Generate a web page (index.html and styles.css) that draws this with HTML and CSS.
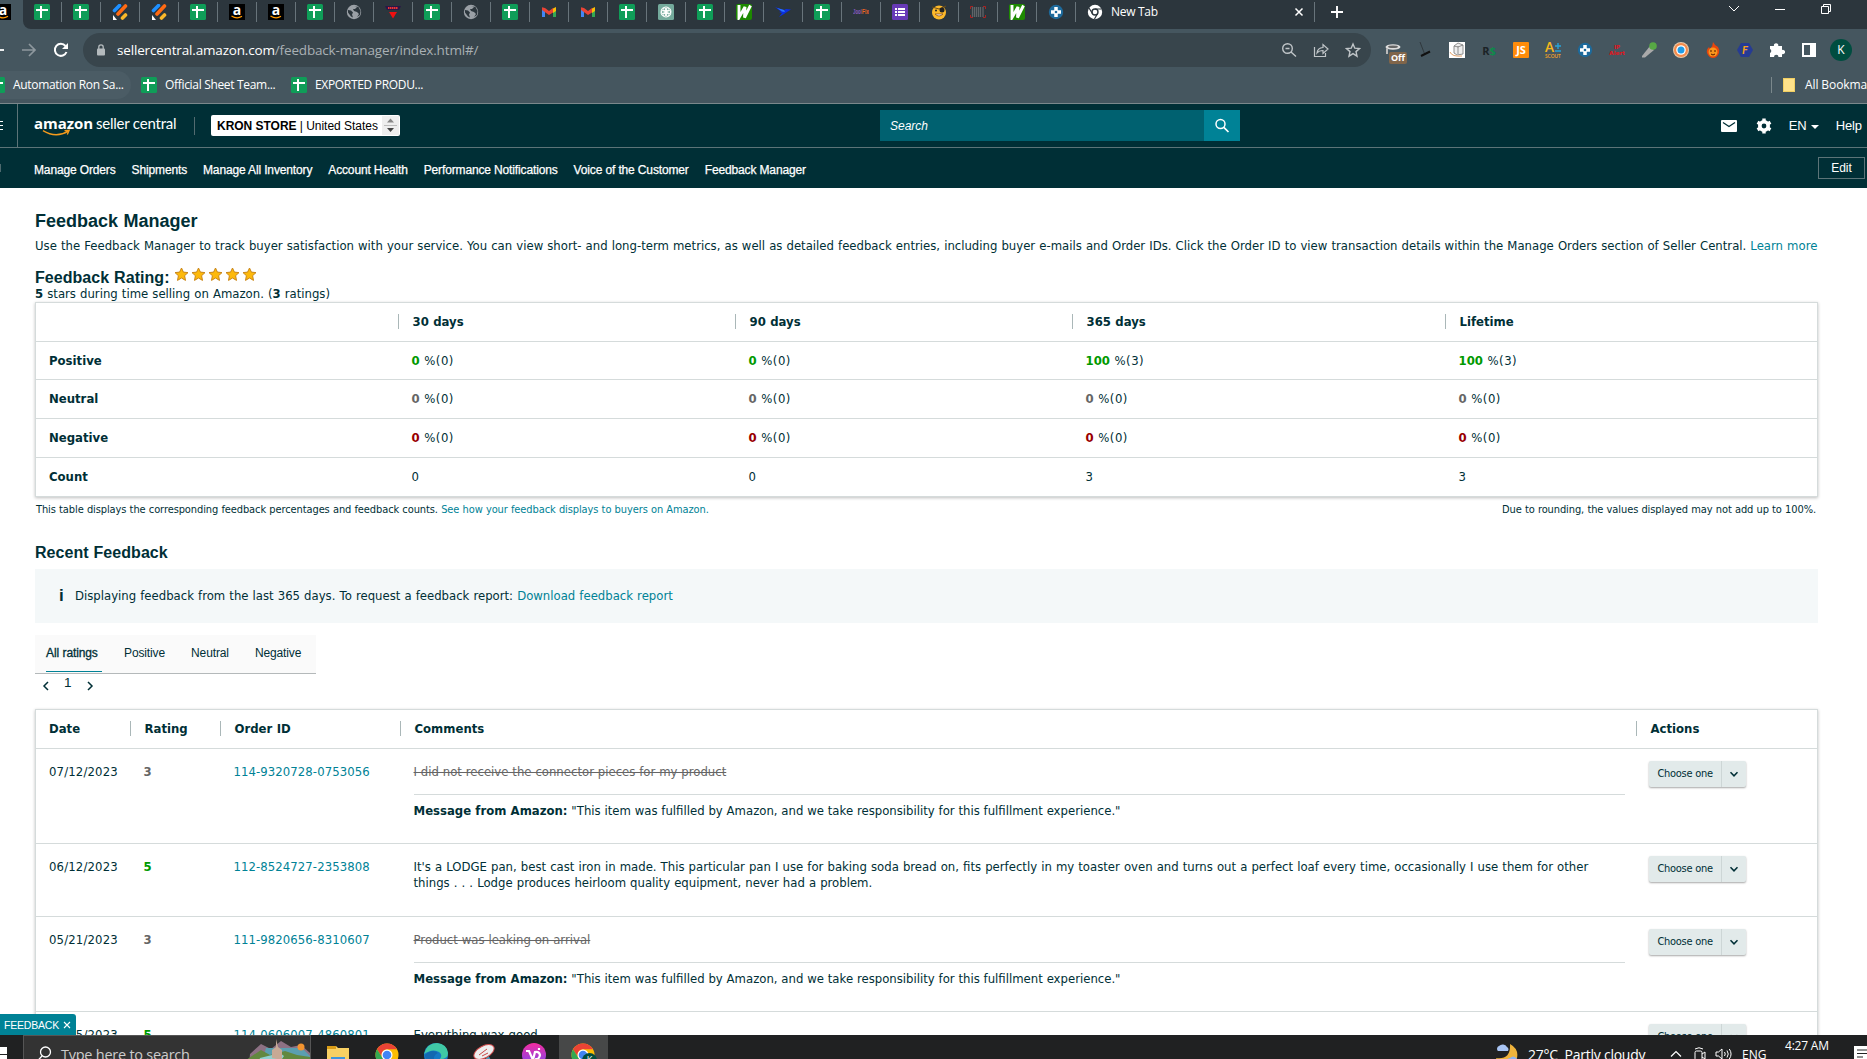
FILE: index.html
```html
<!DOCTYPE html>
<html lang="en">
<head>
    <meta charset="UTF-8">
    <title>Feedback Manager</title>
    <link rel="stylesheet" href="styles.css">
</head>
<body>

<!-- Shared icons -->
<svg class="sprite" width="0" height="0">
    <symbol id="sheet" viewBox="0 0 16 16"><rect width="16" height="16" rx="1.5" fill="#0f9d58"/><path d="M2 6h12M7 2v12" stroke="#fff" stroke-width="2"/></symbol>
    <symbol id="stripes" viewBox="0 0 16 16"><g stroke-width="3.6" stroke-linecap="round"><path d="M2.500 6.500l5-5" stroke="#1e90ff"/><path d="M6 10l7.500-8" stroke="#ff6a13"/><path d="M10.500 14l3-3" stroke="#fbb829"/></g><path d="M1 11l4 5H1z" fill="#fff"/></symbol>
    <symbol id="amazon" viewBox="0 0 16 16"><rect width="16" height="16" fill="#000"/><text x="8" y="10.500" font-size="14" font-weight="bold" text-anchor="middle" fill="#fff" font-family="Open Sans">a</text><path d="M2.500 12q5.500 3.500 10.500.3" fill="none" stroke="#f90" stroke-width="1.200"/></symbol>
    <symbol id="globe" viewBox="0 0 16 16"><circle cx="8" cy="8" r="7.200" fill="#9aa0a6"/><path d="M2 6l3 .5 2 2-1 2 1 3-2-1-3-4zM8 2l3 1-2 2H7l1 2 3 1 2 2-2 3 3-2 .5-4-2-4z" fill="#2c363d"/></symbol>
    <symbol id="redtri" viewBox="0 0 16 16"><path d="M0 2h16l-2 4H2z" fill="#2b1648"/><path d="M3 4h10" stroke="#e33" stroke-width="2" stroke-dasharray="1.500 .5"/><path d="M4 8h8l-4 6.500z" fill="#f01010"/></symbol>
    <symbol id="gmail" viewBox="0 0 16 16"><path d="M1 4v9h3V7z" fill="#4285f4"/><path d="M15 4v9h-3V7z" fill="#34a853"/><path d="M12 4.500L15 3v4l-3 2z" fill="#fbbc04"/><path d="M1 3.200L4 4l4 3 4-3v4.500L8 11 1 6z" fill="#ea4335"/></symbol>
    <symbol id="gpt" viewBox="0 0 16 16"><rect width="16" height="16" rx="1.500" fill="#74aa9c"/><g fill="none" stroke="#fff" stroke-width=".9"><ellipse cx="8" cy="5.500" rx="3" ry="2.600"/><ellipse cx="8" cy="5.500" rx="3" ry="2.600" transform="rotate(60 8 8)"/><ellipse cx="8" cy="5.500" rx="3" ry="2.600" transform="rotate(120 8 8)"/><ellipse cx="8" cy="5.500" rx="3" ry="2.600" transform="rotate(180 8 8)"/><ellipse cx="8" cy="5.500" rx="3" ry="2.600" transform="rotate(240 8 8)"/><ellipse cx="8" cy="5.500" rx="3" ry="2.600" transform="rotate(300 8 8)"/></g></symbol>
    <symbol id="wicon" viewBox="0 0 16 16"><rect width="16" height="16" rx="2" fill="#1d8a00"/><path d="M3 1L3 13.500 9 3l-.5 10.500L14.500 1.500" fill="none" stroke="#fff" stroke-width="2.900"/></symbol>
    <symbol id="bird" viewBox="0 0 16 16"><path d="M0 3l9 3 2-1 5 .5-4 2.500-3 2-5 3 3-4-3-1 2-.5z" fill="#0b2ee0"/><path d="M2 4l7 2 1 2-3-.5z" fill="#2a78ff"/></symbol>
    <symbol id="hd" viewBox="0 0 16 16"><text x="0" y="10" font-size="6.500" font-weight="bold" font-family="Liberation Sans" fill="#8a5bc0" textLength="9" lengthAdjust="spacingAndGlyphs">Jool</text><text x="9" y="10" font-size="6.500" font-weight="bold" font-family="Liberation Sans" fill="#f26522" textLength="7" lengthAdjust="spacingAndGlyphs">Fix</text></symbol>
    <symbol id="forms" viewBox="0 0 16 16"><rect width="16" height="16" rx="1.500" fill="#673ab7"/><path d="M3 5h2M3 8h2M3 11h2M6 5h7M6 8h7M6 11h7" stroke="#fff" stroke-width="1.800"/></symbol>
    <symbol id="emoji" viewBox="0 0 16 16"><circle cx="8" cy="8.500" r="7" fill="#fcb92b"/><path d="M1 3l7 2 7-3" stroke="#6b4b16" fill="none"/><circle cx="11" cy="6" r="2.500" fill="#222"/><circle cx="5" cy="6.500" r="1" fill="#222"/><path d="M4 10q4 4 8 0z" fill="#fff" stroke="#8d4e12" stroke-width=".8"/></symbol>
    <symbol id="barcode" viewBox="0 0 16 16"><path d="M2.500 3v10M4.500 3v10M6.500 3v10M8.500 3v10M10.500 3v10M13 3v10" stroke="#5e6468" stroke-width="1.300"/><path d="M.5 5V2.500H3M13 2.500h2.500V5M.5 11v2.500H3M13 13.500h2.500V11" fill="none" stroke="#a22"/></symbol>
    <symbol id="bluex" viewBox="0 0 16 16"><circle cx="8" cy="8" r="7.200" fill="#1d6a9c"/><path d="M8 3v10M3 8h10" stroke="#fff" stroke-width="3.500"/><circle cx="8" cy="8" r="1.300" fill="#1d6a9c"/></symbol>
    <symbol id="chrome" viewBox="0 0 24 24"><circle cx="12" cy="12" r="11.500" fill="#fbbc04"/><path d="M2 6.300A11.500 11.500 0 0 1 22 6.300H12a5.500 5.500 0 0 0-4.800 8z" fill="#ea4335"/><path d="M2 6.300A11.500 11.500 0 0 0 11 23.500l5-8.700a5.500 5.500 0 0 1-8.800-.3z" fill="#34a853"/><circle cx="12" cy="12" r="5.500" fill="#fff"/><circle cx="12" cy="12" r="4.300" fill="#4285f4"/></symbol>
    <symbol id="star" viewBox="0 0 15 15"><path d="M7.500 1l1.900 4.100 4.600.5-3.400 3.100.9 4.700-4-2.400-4 2.400.9-4.700L1 5.600l4.600-.5z" fill="#fdb90b" stroke="#c9861a"/></symbol>
    <symbol id="down" viewBox="0 0 10 10"><path d="M1.500 3.200L5 6.800l3.500-3.600" fill="none" stroke="currentColor" stroke-width="1.500"/></symbol>
    <symbol id="mag" viewBox="0 0 16 16"><circle cx="6.500" cy="6" r="4.500" fill="none" stroke="currentColor" stroke-width="1.500"/><path d="M9.800 9.300l4.700 4.700" stroke="currentColor" stroke-width="1.700"/></symbol>
</svg>

<div class="tab-strip">
    <div class="tab active"><svg><use href="#amazon"/></svg></div>
    <div class="tabs">
        <div class="tab"><svg><use href="#sheet"/></svg></div>
        <div class="tab"><svg><use href="#sheet"/></svg></div>
        <div class="tab"><svg><use href="#stripes"/></svg></div>
        <div class="tab"><svg><use href="#stripes"/></svg></div>
        <div class="tab"><svg><use href="#sheet"/></svg></div>
        <div class="tab"><svg><use href="#amazon"/></svg></div>
        <div class="tab"><svg><use href="#amazon"/></svg></div>
        <div class="tab"><svg><use href="#sheet"/></svg></div>
        <div class="tab"><svg><use href="#globe"/></svg></div>
        <div class="tab"><svg><use href="#redtri"/></svg></div>
        <div class="tab"><svg><use href="#sheet"/></svg></div>
        <div class="tab"><svg><use href="#globe"/></svg></div>
        <div class="tab"><svg><use href="#sheet"/></svg></div>
        <div class="tab"><svg><use href="#gmail"/></svg></div>
        <div class="tab"><svg><use href="#gmail"/></svg></div>
        <div class="tab"><svg><use href="#sheet"/></svg></div>
        <div class="tab"><svg><use href="#gpt"/></svg></div>
        <div class="tab"><svg><use href="#sheet"/></svg></div>
        <div class="tab"><svg><use href="#wicon"/></svg></div>
        <div class="tab"><svg><use href="#bird"/></svg></div>
        <div class="tab"><svg><use href="#sheet"/></svg></div>
        <div class="tab"><svg><use href="#hd"/></svg></div>
        <div class="tab"><svg><use href="#forms"/></svg></div>
        <div class="tab"><svg><use href="#emoji"/></svg></div>
        <div class="tab"><svg><use href="#barcode"/></svg></div>
        <div class="tab"><svg><use href="#wicon"/></svg></div>
        <div class="tab"><svg><use href="#bluex"/></svg></div>
        <div class="tab new-tab">
            <svg viewBox="0 0 16 16"><circle cx="8" cy="8" r="7.200" fill="#fff"/><circle cx="8" cy="8" r="3" fill="none" stroke="#2c363d" stroke-width="1.400"/><path d="M8 5h6.500M5.400 9.500L2 4M10.600 9.500L7.500 15" stroke="#2c363d" stroke-width="1.200"/></svg>
            <span>New Tab</span>
            <svg class="close" viewBox="0 0 10 10"><path d="M1.500 1.500l7 7M8.500 1.500l-7 7" stroke="#fff" stroke-width="1.500"/></svg>
        </div>
        <svg class="plus" viewBox="0 0 12 12"><path d="M6 0v12M0 6h12" stroke="#fff" stroke-width="1.900"/></svg>
        <div class="window-buttons">
            <svg viewBox="0 0 12 12"><path d="M1 3l5 5 5-5" fill="none" stroke="#fff"/></svg>
            <svg viewBox="0 0 12 12"><path d="M1 6.500h10" stroke="#fff"/></svg>
            <svg viewBox="0 0 12 12"><path d="M1.500 3.500h7v7h-7zM3.500 3.500v-2h7v7h-2" fill="none" stroke="#fff"/></svg>
        </div>
    </div>
</div>

<div class="toolbar">
    <svg class="back" viewBox="0 0 4 16"><path d="M0 8h4" stroke="#fff" stroke-width="1.800"/></svg>
    <svg class="forward" viewBox="0 0 16 16"><path d="M1 8h13M8 2l6 6-6 6" fill="none" stroke="#8e989e" stroke-width="1.700"/></svg>
    <svg class="reload" viewBox="0 0 16 16"><path d="M13.500 10A6 6 0 1 1 12.500 4" fill="none" stroke="#fff" stroke-width="2"/><path d="M15 1v6H9z" fill="#fff"/></svg>
    <div class="address">
        <svg class="lock" viewBox="0 0 10 12"><rect x="1" y="4.500" width="8" height="7" rx="1" fill="#b4babd"/><path d="M2.800 5V3a2.200 2.200 0 0 1 4.400 0v2" fill="none" stroke="#b4babd" stroke-width="1.300"/></svg>
        <span class="url"><b>sellercentral.amazon.com</b>/feedback-manager/index.html#/</span>
        <svg viewBox="0 0 16 16"><circle cx="6.500" cy="6.500" r="4.800" fill="none" stroke="#c0c5c8" stroke-width="1.400"/><path d="M4.500 6.500h4M10 10l5 4.500" stroke="#c0c5c8" stroke-width="1.400"/></svg>
        <svg viewBox="0 0 16 16"><path d="M1.500 5v9.500h11V11" fill="none" stroke="#c0c5c8" stroke-width="1.200"/><path d="M4 11q.5-5 6-5.500V2.500l5 4.500-5 4.500V8.500Q6 8.500 4 11z" fill="none" stroke="#c0c5c8" stroke-width="1.200"/></svg>
        <svg viewBox="0 0 16 16"><path d="M8 2l1.800 4.200 4.700.4-3.500 3 1 4.600-4-2.500-4 2.500 1-4.600-3.500-3 4.700-.4z" fill="none" stroke="#c0c5c8" stroke-width="1.400"/></svg>
    </div>
    <div class="extensions">
        <div class="ext"><svg viewBox="0 0 16 16"><ellipse cx="8" cy="5" rx="7.500" ry="2.800" fill="#ddd"/><ellipse cx="8" cy="4.800" rx="5" ry="1.200" fill="#666"/><path d="M1 6v6h2V7" fill="#bbb"/></svg><span class="off">Off</span></div>
        <div class="ext"><svg viewBox="0 0 16 16"><path d="M3 0l5 13" stroke="#30383d"/><path d="M4 14l9-4.500" stroke="#111" stroke-width="2"/></svg></div>
        <div class="ext"><svg viewBox="0 0 16 16"><rect width="16" height="16" fill="#fff"/><path d="M5 4l4-3 5 2v9l-6 1-3-2z" fill="#eee" stroke="#777" stroke-width=".8"/><path d="M9 4v8M5 4l4 1 5-2" fill="none" stroke="#777" stroke-width=".8"/><path d="M1 10q2 5 12 4" fill="none" stroke="#e2a26a"/></svg></div>
        <div class="ext rs">R<span>$</span></div>
        <div class="ext"><svg viewBox="0 0 16 16"><rect width="16" height="16" rx="1" fill="#ff8c0a"/><text x="8" y="12" font-size="11" font-weight="bold" text-anchor="middle" fill="#fff" font-family="Open Sans">JS</text></svg></div>
        <div class="ext"><svg viewBox="0 0 16 16"><text x="0" y="10" font-size="13" font-weight="bold" fill="#f6b81c" font-family="Lato">A</text><path d="M10 4h6M13 1v6M10 9h6" stroke="#28a2d8" stroke-width="1.400"/><text x="0" y="15.500" font-size="5.500" font-weight="bold" fill="#e39b2c" textLength="16" lengthAdjust="spacingAndGlyphs" font-family="Lato">SCOUT</text></svg></div>
        <div class="ext"><svg><use href="#bluex"/></svg></div>
        <div class="ext"><svg viewBox="0 0 16 16" font-family="DejaVu Sans" font-weight="bold" font-size="5.500" fill="#e0151d" text-anchor="middle"><text x="8" y="7">IP</text><text x="8" y="13" textLength="16" lengthAdjust="spacingAndGlyphs">Alert</text></svg></div>
        <div class="ext"><svg viewBox="0 0 16 16"><path d="M9 4l4 4-9 7.500H1V14z" fill="#aaa"/><circle cx="12" cy="4" r="3.800" fill="#57a845"/></svg></div>
        <div class="ext"><svg viewBox="0 0 16 16"><circle cx="8" cy="8" r="8" fill="#e8c9a8"/><circle cx="8" cy="8" r="7" fill="#f58b4c"/><circle cx="8" cy="8" r="4.800" fill="#fff"/><circle cx="8" cy="8" r="3.500" fill="#1f9ce8"/></svg></div>
        <div class="ext"><svg viewBox="0 0 16 16"><path d="M8 0q2 4 5 5 2 3 1 6-2 5-6 5t-6-5q-1-3 2-6l1 2q3-3 3-7z" fill="#e8450c"/><circle cx="8" cy="10" r="4.500" fill="#f8961d"/><path d="M6 8v2M10 8v2M6 12q2 2 4 0" stroke="#501800" fill="none"/></svg></div>
        <div class="ext"><svg viewBox="0 0 16 16"><path d="M4 1h8l4 7-4 7H4L0 8z" fill="#263b94"/><text x="8" y="12" font-size="11" font-weight="bold" font-style="italic" fill="#f7a11b" text-anchor="middle" font-family="Lato">F</text></svg></div>
        <div class="ext"><svg viewBox="0 0 16 16"><path d="M1 4h4a2.200 2.200 0 1 1 4.200 0H13v4a2.200 2.200 0 1 1 0 4v3H9.500a2.200 2.200 0 0 0-4.500 0H1v-4a2.200 2.200 0 0 0 0-4z" fill="#fff"/></svg></div>
        <div class="ext"><svg viewBox="0 0 16 16"><path d="M1 1h14v14H1zM3 3v10h6V3z" fill="#fff" fill-rule="evenodd"/></svg></div>
        <div class="ext"><span class="avatar">K</span></div>
    </div>
</div>

<div class="bookmarks">
    <div class="bookmark first"><svg><use href="#sheet"/></svg><span>Automation Ron Sa...</span></div>
    <div class="bookmark"><svg><use href="#sheet"/></svg><span>Official Sheet Team...</span></div>
    <div class="bookmark"><svg><use href="#sheet"/></svg><span>EXPORTED PRODU...</span></div>
    <div class="all-bookmarks"><i></i><span>All Bookmarks</span></div>
</div>

<header class="header">
    <div class="menu"><i></i><i></i><i></i></div>
    <div class="logo">
        <b>amazon</b> <span>seller central</span>
        <svg viewBox="0 0 32 8"><path d="M1 1.500Q15 10 28 2M24 1.500l5-.5-2 4.500" fill="none" stroke="#f59b1c" stroke-width="1.400"/></svg>
    </div>
    <div class="store">
        <span><b>KRON STORE</b> | United States</span>
        <div class="stepper"><svg viewBox="0 0 16 19"><path d="M8 2.500l3.500 4h-7z" fill="#888"/><path d="M1.500 9.500h13" stroke="#bbb"/><path d="M8 16l3.500-4h-7z" fill="#444"/></svg></div>
    </div>
    <div class="search"><span>Search</span><div><svg><use href="#mag"/></svg></div></div>
    <div class="header-links">
        <svg class="mail" viewBox="0 0 16 12"><rect width="16" height="12" rx="1" fill="#fff"/><path d="M2 2.500l6 4 6-4" fill="none" stroke="#002f36" stroke-width="1.300"/></svg>
        <svg class="gear" viewBox="0 0 16 16"><circle cx="8" cy="8" r="4.200" fill="none" stroke="#fff" stroke-width="3.600"/><path d="M8 .5v3M8 12.500v3M1.500 4.300l2.600 1.500M11.900 10.200l2.600 1.500M1.500 11.700l2.600-1.500M11.900 5.800l2.600-1.500" stroke="#fff" stroke-width="3.400"/></svg>
        <span>EN</span><i class="caret"></i><span>Help</span>
    </div>
</header>

<nav class="nav">
    <i class="bookmark-icon"></i>
    <div class="nav-links">
        <a>Manage Orders</a><a>Shipments</a><a>Manage All Inventory</a><a>Account Health</a><a>Performance Notifications</a><a>Voice of the Customer</a><a>Feedback Manager</a>
    </div>
    <button class="edit">Edit</button>
</nav>

<main class="content">
    <h1>Feedback Manager</h1>
    <p class="intro">Use the Feedback Manager to track buyer satisfaction with your service. You can view short- and long-term metrics, as well as detailed feedback entries, including buyer e-mails and Order IDs. Click the Order ID to view transaction details within the Manage Orders section of Seller Central. <a>Learn more</a></p>
    <div class="rating">
        <h2>Feedback Rating:</h2>
        <div class="stars"><svg><use href="#star"/></svg><svg><use href="#star"/></svg><svg><use href="#star"/></svg><svg><use href="#star"/></svg><svg><use href="#star"/></svg></div>
    </div>
    <p class="summary"><b>5</b> stars during time selling on Amazon. (<b>3</b> ratings)</p>

    <table class="metrics">
        <colgroup><col class="m-label"><col class="m-30"><col class="m-90"><col class="m-365"><col></colgroup>
        <tr><th></th><th>30 days</th><th>90 days</th><th>365 days</th><th>Lifetime</th></tr>
        <tr class="positive"><td><b>Positive</b></td><td><b class="green">0</b> %(0)</td><td><b class="green">0</b> %(0)</td><td><b class="green">100</b> %(3)</td><td><b class="green">100</b> %(3)</td></tr>
        <tr><td><b>Neutral</b></td><td><b class="gray">0</b> %(0)</td><td><b class="gray">0</b> %(0)</td><td><b class="gray">0</b> %(0)</td><td><b class="gray">0</b> %(0)</td></tr>
        <tr><td><b>Negative</b></td><td><b class="red">0</b> %(0)</td><td><b class="red">0</b> %(0)</td><td><b class="red">0</b> %(0)</td><td><b class="red">0</b> %(0)</td></tr>
        <tr><td><b>Count</b></td><td>0</td><td>0</td><td>3</td><td>3</td></tr>
    </table>
    <div class="footnote">
        <span>This table displays the corresponding feedback percentages and feedback counts. <a>See how your feedback displays to buyers on Amazon.</a></span>
        <span>Due to rounding, the values displayed may not add up to 100%.</span>
    </div>

    <h2 class="recent">Recent Feedback</h2>
    <div class="info"><b>i</b><span>Displaying feedback from the last 365 days. To request a feedback report: <a>Download feedback report</a></span></div>

    <div class="filters"><a class="selected">All ratings</a><a>Positive</a><a>Neutral</a><a>Negative</a></div>
    <div class="pager">
        <svg viewBox="0 0 10 10"><path d="M7 1L3 5l4 4" fill="none" stroke="#002f36" stroke-width="1.500"/></svg>
        <span>1</span>
        <svg viewBox="0 0 10 10"><path d="M3 1l4 4-4 4" fill="none" stroke="#002f36" stroke-width="1.500"/></svg>
    </div>

    <table class="feedback">
        <colgroup><col class="f-date"><col class="f-rating"><col class="f-order"><col class="f-comments"><col></colgroup>
        <tr><th>Date</th><th>Rating</th><th>Order ID</th><th>Comments</th><th>Actions</th></tr>
        <tr class="tall">
            <td>07/12/2023</td><td><b class="gray">3</b></td><td><a>114-9320728-0753056</a></td>
            <td><s>I did not receive the connector pieces for my product</s><p class="message"><b>Message from Amazon:</b> "This item was fulfilled by Amazon, and we take responsibility for this fulfillment experience."</p></td>
            <td><div class="choose"><span>Choose one</span><i><svg><use href="#down"/></svg></i></div></td>
        </tr>
        <tr class="short">
            <td>06/12/2023</td><td><b class="green">5</b></td><td><a>112-8524727-2353808</a></td>
            <td>It's a LODGE pan, best cast iron in made. This particular pan I use for baking soda bread on, fits perfectly in my toaster oven and turns out a perfect loaf every time, occasionally I use them for other<br>things . . . Lodge produces heirloom quality equipment, never had a problem.</td>
            <td><div class="choose"><span>Choose one</span><i><svg><use href="#down"/></svg></i></div></td>
        </tr>
        <tr class="tall">
            <td>05/21/2023</td><td><b class="gray">3</b></td><td><a>111-9820656-8310607</a></td>
            <td><s>Product was leaking on arrival</s><p class="message"><b>Message from Amazon:</b> "This item was fulfilled by Amazon, and we take responsibility for this fulfillment experience."</p></td>
            <td><div class="choose"><span>Choose one</span><i><svg><use href="#down"/></svg></i></div></td>
        </tr>
        <tr class="tall">
            <td>05/15/2023</td><td><b class="green">5</b></td><td><a>114-0606007-4860801</a></td>
            <td>Everything wax good</td>
            <td><div class="choose"><span>Choose one</span><i><svg><use href="#down"/></svg></i></div></td>
        </tr>
    </table>
</main>

<div class="feedback-tab">FEEDBACK <svg viewBox="0 0 8 8"><path d="M1 1l6 6M7 1L1 7" stroke="#fff" stroke-width="1.100"/></svg></div>

<div class="taskbar">
    <svg class="start" viewBox="0 0 17 16"><path d="M0 0h7v7H0zM0 8h7v8H0z" fill="#fff"/></svg>
    <div class="task-search">
        <svg class="task-mag" viewBox="0 0 16 16"><circle cx="9.500" cy="6" r="5" fill="none" stroke="#fff" stroke-width="1.300"/><path d="M6 10l-5 5.500" stroke="#fff" stroke-width="1.300"/></svg>
        <span>Type here to search</span>
        <svg class="scene" viewBox="0 0 64 38"><path d="M4 18L15 8l10 5 10-8 10 6 10-2 9 8v21H2z" fill="#8d7184"/><path d="M20 12h36l8 8v6H16z" fill="#5b9fb0"/><path d="M0 24l15-10 9 5 15-4 12 4 13 2v17H0z" fill="#62883f"/><path d="M14 22l20-5 4 3-12 18H8z" fill="#8fd0cf"/><path d="M26 22v-8l4-3V3l2 8 4 3v10z" fill="#c8a995"/><circle cx="55" cy="11" r="3.500" fill="#f5952f"/><circle cx="50" cy="28" r="4" fill="#e58fb2"/></svg>
    </div>
    <div class="app"><svg viewBox="0 0 24 24"><path d="M1 3h9l2 2h11v17H1z" fill="#f8d063"/><path d="M1 3h9v3H1z" fill="#d99c17"/><path d="M5 14h14v9H5z" fill="#3f95dc"/></svg></div>
    <div class="app"><svg><use href="#chrome"/></svg></div>
    <div class="app"><svg viewBox="0 0 24 24"><circle cx="12" cy="12" r="12" fill="#1679c5"/><path d="M0 11Q3 0 13 0q10 1 11 10 0 6-8 6 3-4-1-7-6-4-15 2z" fill="#40c9a5"/><path d="M1 12q7-7 13-2-5 2-4 8 2 4 7 5Q3 26 1 12z" fill="#1468b0"/></svg></div>
    <div class="app"><svg viewBox="0 0 24 24"><path d="M15 12l6 10H9z" fill="#4794b5"/><ellipse cx="11" cy="9" rx="11" ry="6" transform="rotate(-28 11 9)" fill="#eee" stroke="#cf4b4b"/><path d="M6 12l8-6M9 13l6-3" stroke="#c44"/></svg></div>
    <div class="app"><svg viewBox="0 0 24 24"><defs><linearGradient id="pv" x2="0" y2="1"><stop stop-color="#f52da0"/><stop offset="1" stop-color="#7447f5"/></linearGradient></defs><circle cx="12" cy="12" r="12" fill="url(#pv)"/><path d="M4 8h3l4 9 2-8q4-1 5 3-1 5-5 4M17 5v2" fill="none" stroke="#fff" stroke-width="2.200"/></svg></div>
    <div class="app running"><svg><use href="#chrome"/></svg><span>K</span></div>
    <div class="tray">
        <svg class="moon" viewBox="0 0 24 24"><path d="M15 2q9 5 7 14-3 6-12 6-7-1-9-6 15 2 14-14z" fill="#efb33c"/><path d="M3 9a3 3 0 0 1 1-5 5 5 0 0 1 8 1 3 3 0 0 1 1 4z" fill="#a9c5f5"/><path d="M12 22a4 4 0 0 1 3-6q4-4 8 2v4z" fill="#8db2f3"/></svg>
        <span class="weather">27°C&nbsp; Partly cloudy</span>
        <svg class="up" viewBox="0 0 12 12"><path d="M1 8.500l5-5 5 5" fill="none" stroke="#fff" stroke-width="1.200"/></svg>
        <svg class="cam" viewBox="0 0 14 14"><rect x="2" y="4" width="7" height="9" rx="1.500" fill="none" stroke="#fff"/><path d="M9 7l3-2v7l-3-2M2 2q4-2.500 8 0" fill="none" stroke="#fff"/></svg>
        <svg class="sound" viewBox="0 0 17 14"><path d="M1 5h2.500L7 2v10L3.500 9H1z" fill="none" stroke="#fff"/><path d="M9.500 5q1.500 2 0 4M12 3.500q2.500 3.500 0 7M14.300 2q3.500 5 0 10" fill="none" stroke="#fff"/></svg>
        <span class="lang">ENG</span>
        <span class="clock">4:27 AM</span>
        <svg class="note" viewBox="0 0 13 16"><path d="M0 0h13v16H0z" fill="#fff"/><path d="M3 4h10M3 7.500h10M3 11h6" stroke="#222"/></svg>
    </div>
</div>

</body>
</html>
```
FILE: styles.css
```css
* {
    box-sizing: border-box;
}
body {
    margin: 0;
    width: 1867px;
    height: 1059px;
    overflow: hidden;
    display: flex;
    flex-direction: column;
    position: relative;
    font-family: "DejaVu Sans", sans-serif;
    font-size: 11.7px;
    color: #002f36;
    background: #fff;
}
svg {
    display: block;
    width: 16px;
    height: 16px;
    flex: none;
}
.sprite {
    position: absolute;
    width: 0;
    height: 0;
}
h1, h2, p {
    margin: 0;
}
a {
    color: #008296;
}

/* Browser window */
.tab-strip {
    height: 29px;
    flex: none;
    display: flex;
    background: #45565f;
}
.tab {
    width: 39px;
    height: 20px;
    margin-top: 2px;
    display: flex;
    flex: none;
    align-items: center;
    justify-content: center;
    border-right: 1px solid #68747b;
}
.tab.active {
    width: 23px;
    border: 0;
    justify-content: flex-start;
}
.tab.active svg {
    margin-left: -5px;
}
.tabs {
    flex: 1;
    display: flex;
    background: #2c363d;
    border-bottom-left-radius: 8px;
}
.new-tab {
    width: 239px;
    padding: 0 10px 0 11px;
    justify-content: flex-start;
    font: 12px "Open Sans", sans-serif;
    letter-spacing: -0.3px;
    color: #fff;
}
.new-tab span {
    margin-left: 8px;
    margin-top: -1px;
    flex: 1;
}
.new-tab .close {
    width: 10px;
    height: 10px;
}
.plus {
    width: 12px;
    height: 12px;
    margin: 6px 0 0 16px;
}
.window-buttons {
    display: flex;
    gap: 34px;
    margin: 3px 35px 0 auto;
}
.window-buttons svg {
    width: 12px;
    height: 12px;
}
.toolbar {
    height: 42px;
    flex: none;
    display: flex;
    align-items: center;
    background: #45565f;
}
.back {
    width: 4px;
}
.forward {
    margin-left: 17px;
}
.reload {
    margin-left: 16px;
}
.address {
    width: 1288px;
    height: 34px;
    margin-left: 14px;
    padding: 0 10px 0 13px;
    display: flex;
    align-items: center;
    gap: 16px;
    border-radius: 17px;
    background: #38454c;
}
.lock {
    width: 10px;
    height: 12px;
}
.url {
    flex: 1;
    margin-left: -5px;
    margin-top: -1px;
    font: 13.5px "Open Sans", sans-serif;
    letter-spacing: -0.17px;
    color: #a9b0b4;
}
.url b {
    font-weight: normal;
    color: #fff;
}
.extensions {
    margin-left: 6px;
    display: flex;
}
.ext {
    width: 32px;
    height: 34px;
    display: flex;
    align-items: center;
    justify-content: center;
    position: relative;
}
.off {
    position: absolute;
    left: 12px;
    top: 19px;
    width: 18px;
    height: 12px;
    border-radius: 2px;
    background: #80654a;
    color: #fff;
    font: bold 9px/12px "Open Sans", sans-serif;
    text-align: center;
}
.rs {
    font: bold 11px "Open Sans", sans-serif;
    color: #1b2226;
}
.rs span {
    color: #0d8a4a;
}
.avatar {
    width: 22px;
    height: 22px;
    border-radius: 50%;
    background: #004d40;
    color: #fff;
    font: 12px/22px "Open Sans", sans-serif;
    text-align: center;
}
.bookmarks {
    height: 33px;
    flex: none;
    display: flex;
    align-items: flex-start;
    background: #45565f;
    border-bottom: 1px solid #7b888c;
    color: #fff;
    font: 12px "Open Sans", sans-serif;
    letter-spacing: -0.32px;
    white-space: nowrap;
}
.bookmarks span {
    margin-top: -2px;
}
.bookmark {
    width: 150px;
    height: 28px;
    padding-left: 10px;
    display: flex;
    align-items: center;
    gap: 8px;
}
.bookmark.first {
    width: 131px;
    padding-left: 0;
    border-radius: 0 14px 14px 0;
    background: #4b5c65;
}
.first svg {
    margin-left: -11px;
}
.all-bookmarks {
    height: 16px;
    margin: 6px -30px 0 auto;
    padding-left: 11px;
    display: flex;
    align-items: center;
    border-left: 1px solid #7b888c;
    width: 126px;
    letter-spacing: -0.1px;
}
.all-bookmarks i {
    width: 12px;
    height: 14px;
    margin-right: 10px;
    background: #ffe28a;
    border: 1px solid #f1cf62;
}

/* Seller Central header */
.header {
    height: 44px;
    flex: none;
    display: flex;
    align-items: center;
    background: #002f36;
    border-bottom: 1px solid #5c7478;
    color: #fff;
    font-family: "Liberation Sans", sans-serif;
}
.menu {
    width: 18px;
    height: 43px;
    padding-top: 17px;
    border-right: 1px solid #5c7478;
}
.menu i {
    display: block;
    width: 3px;
    height: 1px;
    margin-bottom: 3px;
    background: #fff;
}
.logo {
    width: 177px;
    height: 18px;
    padding-left: 16px;
    position: relative;
    font: 15px/12px "Open Sans", sans-serif;
    letter-spacing: -0.05px;
    white-space: nowrap;
    border-right: 1px solid #526b70;
}
.logo span {
    font-family: Lato, sans-serif;
    letter-spacing: -0.2px;
    margin-left: -1px;
}
.logo svg {
    position: absolute;
    left: 24px;
    top: 12px;
    width: 30px;
    height: 8px;
}
.store {
    width: 189px;
    height: 21px;
    margin-left: 16px;
    padding: 1px 1px 1px 6px;
    display: flex;
    align-items: center;
    justify-content: space-between;
    border-radius: 2px;
    background: #fff;
    color: #000;
    font-size: 12px;
    letter-spacing: -0.03px;
    white-space: nowrap;
}
.stepper {
    background: #eee;
}
.stepper svg {
    height: 19px;
    width: 17px;
}
.search {
    width: 360px;
    height: 31px;
    margin-left: 480px;
    display: flex;
    align-items: center;
    background: #006170;
    font-size: 12px;
    font-style: italic;
}
.search span {
    flex: 1;
    padding-left: 10px;
}
.search div {
    width: 36px;
    height: 31px;
    display: flex;
    align-items: center;
    justify-content: center;
    background: #008296;
}
.header-links {
    margin-left: auto;
    padding-right: 5px;
    display: flex;
    align-items: center;
    font-size: 13px;
    letter-spacing: -0.1px;
}
.mail {
    width: 16px;
    height: 12px;
}
.gear {
    margin: 0 17px 0 19px;
}
.caret {
    border: 4px solid transparent;
    border-top-color: #fff;
    border-bottom: 0;
    margin: 2px 17px 0 4px;
}
.nav {
    height: 40px;
    flex: none;
    display: flex;
    align-items: flex-start;
    background: #002f36;
    font-family: "Liberation Sans", sans-serif;
}
.bookmark-icon {
    width: 1px;
    height: 8px;
    margin-top: 16px;
    background: #4d696e;
}
.nav-links {
    display: flex;
    gap: 16px;
    padding: 15px 0 0 33px;
    font-size: 12px;
    line-height: 14px;
    letter-spacing: -0.14px;
}
.nav-links a {
    color: #fff;
    -webkit-text-stroke: 0.25px #fff;
    white-space: nowrap;
}
.edit {
    width: 47px;
    height: 22px;
    margin: 9px 2px 0 auto;
    padding: 0;
    border: 1px solid #5c7478;
    background: none;
    color: #fff;
    font: 12px "Liberation Sans", sans-serif;
}

/* Page content */
.content {
    flex: 1;
    min-height: 0;
    overflow: hidden;
    padding: 22px 49px 0 35px;
    word-spacing: 0.37px;
}
h1, h2 {
    font-family: "Liberation Sans", sans-serif;
    font-weight: bold;
}
h1 {
    font-size: 18px;
    line-height: 22px;
}
h2 {
    font-size: 16px;
    line-height: 19px;
    letter-spacing: 0.05px;
}
.intro {
    margin-top: 6px;
    line-height: 16px;
    white-space: nowrap;
}
.rating {
    display: flex;
    margin-top: 14px;
    height: 19px;
}
.stars {
    display: flex;
    gap: 2px;
    margin-left: 4px;
    margin-top: -1px;
}
.stars svg {
    width: 15px;
    height: 15px;
}
.summary {
    line-height: 15px;
}
table {
    width: 1783px;
    border-collapse: collapse;
    table-layout: fixed;
    border: 1px solid #d5dbdb;
    box-shadow: 0 1px 3px rgba(0, 0, 0, 0.25);
}
th, td {
    text-align: left;
    padding: 0 0 0 14px;
    border-bottom: 1px solid #d5dbdb;
    font-weight: normal;
}
th {
    font-weight: bold;
    padding-left: 15px;
    background: linear-gradient(#aab7b8, #aab7b8) no-repeat 0 11px / 1px 15px;
}
th:first-child, td:first-child {
    padding-left: 13px;
    background: none;
}
.metrics tr {
    height: 39px;
}
.metrics .positive {
    height: 38px;
}
.metrics td + td {
    letter-spacing: 0.5px;
}
.metrics td b {
    letter-spacing: 0;
}
.metrics .m-label { width: 362px; }
.metrics .m-30, .metrics .m-90 { width: 337px; }
.metrics .m-365 { width: 373px; }
.green { color: #009900; }
.gray { color: #666; }
.red { color: #990000; }
.footnote {
    display: flex;
    justify-content: space-between;
    margin: 6px 2px 0 1px;
    font-size: 9.9px;
    line-height: 14px;
    letter-spacing: -0.09px;
    word-spacing: 0.2px;
}
.recent {
    margin-top: 26px;
}
.info {
    width: 1783px;
    height: 54px;
    margin-top: 7px;
    padding-left: 24px;
    display: flex;
    align-items: center;
    background: #f4f8f9;
}
.info b {
    font: bold 17px "Liberation Sans", sans-serif;
    width: 16px;
}
.filters {
    width: 281px;
    height: 39px;
    margin-top: 12px;
    padding-left: 11px;
    display: flex;
    background: #fafafa;
    border-bottom: 1px solid #b4b9ba;
    font: 12px/37px "Liberation Sans", sans-serif;
    letter-spacing: -0.12px;
}
.filters a {
    flex: none;
    color: #002f36;
    margin-right: 26px;
    white-space: nowrap;
}
.filters .selected {
    width: 56px;
    height: 37px;
    margin-right: 22px;
    border-bottom: 1px solid #008296;
    -webkit-text-stroke: 0.3px #002f36;
}
.pager {
    display: flex;
    align-items: center;
    height: 20px;
    margin-bottom: 15px;
    padding-left: 6px;
    font: 13.5px "Liberation Sans", sans-serif;
    gap: 13px;
}
.pager svg {
    width: 10px;
    height: 10px;
    margin-top: 3px;
}
.pager span {
    margin-top: -3px;
}
.feedback .f-date { width: 94px; }
.feedback .f-rating { width: 90px; }
.feedback .f-order { width: 180px; }
.feedback .f-comments { width: 1236px; }
.feedback th {
    height: 39px;
}
.feedback td {
    vertical-align: top;
    padding-top: 15px;
    line-height: 16px;
}
.feedback td:first-child {
    letter-spacing: 0.15px;
}
.feedback td:last-child {
    padding-top: 12px;
    padding-left: 13px;
}
.feedback td a {
    letter-spacing: 0.07px;
}
.tall { height: 95px; }
.short { height: 73px; }
.feedback s {
    color: #666;
    word-spacing: 0.15px;
}
.message {
    margin: 14px 11px 0 0;
    padding-top: 8px;
    border-top: 1px solid #d5dbdb;
    word-spacing: 0.12px;
}
.choose {
    width: 97px;
    height: 26px;
    display: flex;
    align-items: center;
    border-radius: 2px;
    background: #e2eaea;
    box-shadow: 0 1px 2px rgba(0, 0, 0, 0.35);
    font-size: 9.9px;
    letter-spacing: -0.3px;
}
.choose span {
    width: 72px;
    padding-left: 9px;
    margin-top: -1px;
    white-space: nowrap;
}
.choose i {
    width: 25px;
    height: 26px;
    padding: 8px 0 0 7px;
    border-left: 1px solid #cdd6d6;
}
.choose svg {
    width: 10px;
    height: 10px;
}
.feedback-tab {
    position: absolute;
    left: 0;
    top: 1014px;
    width: 76px;
    height: 21px;
    padding-left: 4px;
    display: flex;
    align-items: center;
    gap: 4px;
    border-radius: 0 3px 0 0;
    background: #008296;
    color: #fff;
    font: 10.5px "Liberation Sans", sans-serif;
    letter-spacing: -0.2px;
}
.feedback-tab svg {
    width: 8px;
    height: 8px;
}

/* Windows taskbar, runs off the bottom of the screen */
.taskbar {
    height: 24px;
    flex: none;
    overflow: hidden;
    display: flex;
    align-items: flex-start;
    background: #202122;
    color: #fff;
    font: 14px "Open Sans", sans-serif;
}
.start {
    margin-top: 12px;
    width: 17px;
}
.task-search {
    width: 288px;
    height: 40px;
    margin-left: 6px;
    display: flex;
    align-items: center;
    border: 1px solid #555;
    background: #333;
    color: #ccc;
    font-size: 14.5px;
    letter-spacing: -0.25px;
    white-space: nowrap;
}
.task-mag {
    margin: -2px 9px 0 12px;
}
.task-search span {
    margin-top: -2px;
}
.task-search .scene {
    width: 64px;
    height: 38px;
    margin-left: auto;
}
.app {
    width: 49px;
    height: 40px;
    padding: 8px 0 0 12px;
    flex: none;
    position: relative;
}
.app svg {
    width: 24px;
    height: 24px;
}
.task-search + .app {
    margin-left: 3px;
}
.running {
    background: #474848;
}
.running span {
    position: absolute;
    left: 23px;
    top: 18px;
    width: 15px;
    height: 15px;
    border-radius: 50%;
    background: #004d40;
    font-size: 9px;
    line-height: 13px;
    text-align: center;
}
.tray {
    margin-left: auto;
    display: flex;
    height: 38px;
    align-items: center;
    white-space: nowrap;
}
.moon {
    width: 24px;
    height: 24px;
}
.weather {
    width: 118px;
    margin-left: 9px;
    letter-spacing: -0.25px;
}
.up {
    width: 12px;
    height: 12px;
    margin-left: 24px;
}
.cam {
    width: 14px;
    height: 14px;
    margin-left: 11px;
}
.sound {
    width: 17px;
    height: 14px;
    margin-left: 8px;
}
.lang {
    width: 24px;
    margin-left: 10px;
    font-size: 12px;
}
.clock {
    align-self: flex-start;
    width: 44px;
    margin: 2px 25px 0 19px;
    font-size: 12px;
    letter-spacing: -0.2px;
}
.note {
    width: 13px;
    height: 16px;
}
```
